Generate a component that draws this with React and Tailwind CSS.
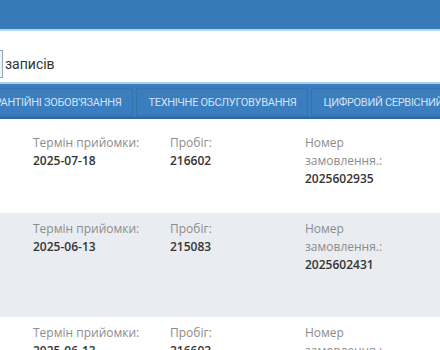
import React from 'react';

const rows = [
  { date: '2025-07-18', mileage: '216602', order: '2025602935', bg: 'bg-white', cls: 'h-[94px] pt-[15px]' },
  { date: '2025-06-13', mileage: '215083', order: '2025602431', bg: 'bg-[#e9ecf1]', cls: 'h-[104px] pt-[7px]' },
  { date: '2025-06-13', mileage: '216602', order: '2025602430', bg: 'bg-white', cls: 'h-[104px] pt-[7px]' },
];

const tabs = ['Гарантійні зобов’язання', 'Технічне обслуговування', 'Цифровий сервісний журнал'];

function ServiceRow({ row }) {
  return (
    <div className={`${row.bg} ${row.cls} flex pl-[33px] text-[12px] leading-[18px] font-['Open_Sans',sans-serif]`}>
      <div className="w-[137px] shrink-0">
        <div className="text-[#8c8c8c]">Термін прийомки:</div>
        <div className="font-semibold text-[#333]">{row.date}</div>
      </div>
      <div className="w-[135px] shrink-0">
        <div className="text-[#8c8c8c]">Пробіг:</div>
        <div className="font-semibold text-[#333]">{row.mileage}</div>
      </div>
      <div className="w-[95px] shrink-0">
        <div className="text-[#8c8c8c]">Номер замовлення.:</div>
        <div className="font-semibold text-[#333]">{row.order}</div>
      </div>
    </div>
  );
}

export default function App() {
  return (
    <div className="w-[440px] h-[350px] overflow-hidden bg-white">
      {/* header */}
      <div className="h-[31px] bg-[#3579b8] border-b-2 border-[#b5d8ef]" />

      {/* page size */}
      <div className="h-[53px] flex items-start pt-[19px] border-b-2 border-[#a9cfea]">
        <div className="h-[28px] w-[3px] border border-l-0 border-[#8fa9bd] bg-[#eef3f7]" />
        <span className="ml-[2px] mt-[4px] text-[14px] text-[#333] font-['Roboto',sans-serif]">записів</span>
      </div>

      {/* tabs */}
      <div className="h-[35px] bg-[#3a7ebf] border-b-2 border-[#2c69a2] overflow-hidden">
        <div className="flex h-full ml-[-29px] pt-[4px] gap-[3px]">
          {tabs.map((t) => (
            <div
              key={t}
              className="shrink-0 h-full px-[11px] flex items-center rounded-t-[3px] border border-b-0 border-[#3573ad] shadow-[inset_0_-2px_0_#3574ae] text-[11px] uppercase tracking-[-0.3px] text-[#d3e3f3] font-['Roboto',sans-serif] whitespace-nowrap"
            >
              {t}
            </div>
          ))}
        </div>
      </div>

      {rows.map((r, i) => (
        <ServiceRow key={i} row={r} />
      ))}
    </div>
  );
}
